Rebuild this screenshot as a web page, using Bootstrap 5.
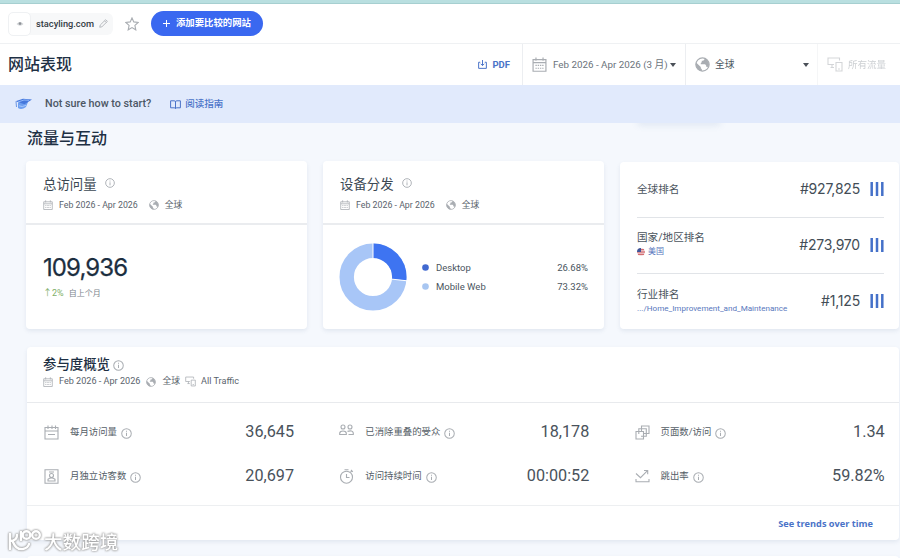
<!DOCTYPE html>
<html lang="zh-CN">
<head>
<meta charset="utf-8">
<meta name="viewport" content="width=device-width, initial-scale=1">
<title>网站表现</title>
<link href="https://cdn.jsdelivr.net/npm/bootstrap@5.3.0/dist/css/bootstrap.min.css" rel="stylesheet">
<style>
body{font-family:Roboto,"Noto Sans CJK SC",sans-serif;font-size:9.5px;line-height:1;color:#4a5560;background:#f5f8fd;height:558px;overflow:hidden;position:relative}
svg{display:block;flex:none}
.ico{fill:none;stroke:#a9adb2;stroke-width:1.1}
.strip{height:4px;background:#b9dfe0;border-bottom:1px solid #a6cfd0}
.topbar{height:40px;border-bottom:1px solid #eff1f3;padding-left:8px}
.site-chip{height:22px;width:105px;background:#f7f8f9;border-radius:6px;font-size:9.25px;font-weight:500;color:#333b44}
.favicon-box{width:23px;height:24px;background:#fff;border:1px solid #eff1f3;border-radius:5px}
.btn-compare{height:25px;width:112px;background:#3a68f0;color:#fff;font-size:9.4px;font-weight:700;border-radius:13px}
.titlebar{height:41px}
.page-title{font-size:16px;font-weight:500;color:#1e3044;padding-left:8px}
.filter{border-left:1px solid #eceef1;height:41px}
.blue{color:#4a73c8}
.caret{width:0;height:0;border:3.5px solid transparent;border-top:4px solid #4a5058;border-bottom:0}
.hint{height:38px;background:#e1eafc;padding-left:14px;position:relative;z-index:1}
.section-title{font-size:16px;font-weight:500;color:#1e3044;height:38px;padding:6px 0 0 27px}
.panel{background:#fff;border-radius:4px;box-shadow:0 2px 4px rgba(70,100,140,.11)}
.cards{padding-left:26px;gap:16px}
.cards .metric{width:281px;height:168px}
.metric-head{height:64px;padding:17px 17px 0;border-bottom:2px solid #eaecef}
.metric-title{font-size:13.4px;font-weight:400;color:#3c4853;height:14px}
.meta{font-size:8.8px;color:#5a636c}
.big-number{font-family:Inter,sans-serif;font-size:24px;font-weight:400;color:#1c2e40;letter-spacing:-.9px;-webkit-text-stroke:.25px #1c2e40}
.rank{width:279px;height:167px;padding:0 15px 0 17px;margin-top:1px}
.rank-row{height:56px;border-bottom:1px solid #e1e4e8;padding-bottom:2px}
.rank-row:last-child{border:0}
.rank-label{font-size:10.6px;color:#49535c}
.rank-link{font-size:8.1px;color:#5877bd}
.rank-value{font-family:Inter,sans-serif;font-size:14px;font-weight:400;color:#434d56;letter-spacing:-.2px}
.engage{margin:18px 0 0 27px;width:872px;height:193px}
.engage-head{height:56px;padding:11px 17px 0 16px;border-bottom:1px solid #e8eaed}
.engage-body{height:103px;padding:7px 0 0 17px;border-bottom:1px solid #edeff1}
.kpi{height:44px;width:250px}
.kpi-icon{width:26px}
.kpi-label{font-size:9.4px;color:#555e67}
.kpi-value{font-size:16.2px;color:#49525b;padding-top:1px}
.trend{height:36px;font-family:"Open Sans",sans-serif;font-weight:700;font-size:9.2px;padding-right:26px}
.next-panel{margin:16px 0 0 27px;width:872px;height:10px}
.tab-shadow{left:637px;top:115px;width:84px;height:8px;border-radius:6px;box-shadow:0 3px 6px rgba(100,130,180,.12)}
.stamp{left:8px;top:528px;z-index:3;filter:drop-shadow(0 0 1px #999) drop-shadow(0 0 .6px #aaa)}
.stamp-text{font-family:"Noto Sans CJK SC",sans-serif;font-size:18.6px;font-weight:500;color:#fff}
</style>
<script src="https://cdn.jsdelivr.net/npm/bootstrap@5.3.0/dist/js/bootstrap.bundle.min.js"></script>
</head>
<body>
<svg width="0" height="0" class="position-absolute">
  <symbol id="cal" viewBox="0 0 14 14"><path d="M1 2.500h12v10.800H1zM1 5.300h12M3.700.4v3M10.300.4v3"/><path d="M3.200 7.800h7.800M3.200 10.500h7.800" stroke-dasharray="1.300 .8"/></symbol>
  <symbol id="info" viewBox="0 0 12 12"><circle cx="6" cy="6" r="5.200"/><path d="M6 5.200v3.600M6 3.100v1.100"/></symbol>
  <symbol id="globe" viewBox="0 0 14 14"><circle cx="7" cy="7" r="6.200"/><path fill="#a9adb2" stroke="none" d="M1 5.200l4.400 4.100v1.200l1 1v1.800A6.500 6.500 0 0 1 1 5.200zM8.800 1.100v1.200L7.600 3.500H6.300v1.400l-.9.8v1h4l1 1.200v1.300h1.100l.8.9A6.400 6.400 0 0 0 8.800 1.100z"/></symbol>
  <symbol id="devices" viewBox="0 0 16 15"><path d="M12.500 3.500V1H1v6.500h6M3.500 10.500H7M5 7.500v3M9 5.500h6v8.500H9zM11 12h2"/></symbol>
  <symbol id="bars" viewBox="0 0 14 14"><path d="M1.700 0v14M7 0v14M12.300 0v14" stroke="#4571c9" stroke-width="2.500"/></symbol>
  <symbol id="bars-low" viewBox="0 0 14 14"><path d="M1.700 0v14M7 0v14M12.300 2v12" stroke="#4571c9" stroke-width="2.500"/></symbol>
</svg>

<div class="strip"></div>
<header class="topbar bg-white d-flex align-items-center">
  <div class="site-chip d-flex align-items-center">
    <div class="favicon-box d-flex align-items-center justify-content-center">
      <svg width="8" height="6" viewBox="0 0 8 6"><path d="M.5 3Q4-.8 7.500 3 4 6.500.500 3z" fill="#d3d5d8"/><circle cx="4" cy="2.600" r="1.300" fill="#8d9196"/></svg>
    </div>
    <span style="margin-left:5px">stacyling.com</span>
    <svg class="ico" style="margin-left:5px" width="9" height="9" viewBox="0 0 10 10"><path d="M.8 9.200l.6-2.500L7.400.8l1.900 1.900-6 5.900zM6.200 2l1.900 1.900" stroke-width=".9"/></svg>
  </div>
  <svg class="ico" style="margin-left:12px" width="14" height="14" viewBox="0 0 14 14"><path d="M7 .9l1.800 4 4.400.5-3.300 3 .9 4.400L7 10.600l-3.800 2.200.9-4.400-3.300-3 4.400-.5z" stroke-width="1.100"/></svg>
  <button class="btn btn-compare d-flex align-items-center justify-content-center p-0 border-0" style="margin-left:12px">
    <svg width="7" height="7" viewBox="0 0 7 7" stroke="#fff" stroke-width="1"><path d="M3.500 0v7M0 3.500h7"/></svg><span style="margin-left:6px">添加要比较的网站</span>
  </button>
</header>

<div class="titlebar bg-white d-flex align-items-center">
  <h1 class="page-title m-0 flex-grow-1">网站表现</h1>
  <a class="blue text-decoration-none d-flex align-items-center fw-bold" style="padding-right:12px;gap:5px">
    <svg width="9" height="9" viewBox="0 0 10 10" fill="none" stroke="#4a73c8" stroke-width="1.100"><path d="M2.500 2.500H.7v6.800h8.600V2.500H7.500M5 0v6M3 4.200l2 2 2-2"/></svg>PDF</a>
  <div class="filter d-flex align-items-center" style="width:163px;padding-left:9px">
    <svg class="ico" width="15" height="15"><use href="#cal"/></svg>
    <span class="text-nowrap" style="margin-left:6px;font-size:9.800px;color:#6b737b">Feb 2026 - Apr 2026 (3 月)</span><span class="caret" style="margin-left:2px"></span>
  </div>
  <div class="filter d-flex align-items-center" style="width:132px;padding-left:9px">
    <svg class="ico" width="15" height="15"><use href="#globe"/></svg>
    <span style="margin-left:5px;font-size:9.700px">全球</span><span class="caret ms-auto" style="margin-right:8px"></span>
  </div>
  <div class="filter d-flex align-items-center opacity-50" style="width:83px;padding-left:9px">
    <svg class="ico" width="16" height="15"><use href="#devices"/></svg>
    <span class="text-nowrap" style="margin-left:5px;color:#9ba1a8">所有流量</span>
  </div>
</div>

<div class="hint d-flex align-items-center">
  <svg width="19" height="14" viewBox="0 0 19 14"><path d="M4 5.500l10-.5-2 5q-4.500 3.500-8 1z" fill="#6d9ff0"/><path d="M1.500 4.200L9 1.800l9 .7-7.500 4.800z" fill="#4577dc"/><path d="M4 5l6-2 5 .3" fill="none" stroke="#8fb7fa"/><path d="M2 4.500l.500 5.500" stroke="#6b96e4"/><path d="M5 8.800q3 1.800 7-.5" stroke="#a7c7fc" fill="none"/></svg>
  <span style="margin-left:12px;font-size:10.750px;font-weight:500;color:#4c5764">Not sure how to start?</span>
  <svg style="margin-left:19px" width="11" height="9" viewBox="0 0 11 9" fill="none" stroke="#4a73c8"><path d="M.6.8h3.600q1.300 0 1.300 1 0-1 1.300-1h3.600v7H6.800q-1.300 0-1.300.8 0-.8-1.300-.8H.6zM5.500 1.800v6.500"/></svg>
  <span class="blue" style="margin-left:4px;font-size:9.500px;font-weight:500">阅读指南</span>
</div>
<div class="tab-shadow position-absolute"></div>

<h2 class="section-title m-0">流量与互动</h2>

<main>
  <div class="cards d-flex">
    <section class="panel metric">
      <div class="metric-head">
        <div class="metric-title d-flex align-items-center">总访问量<svg class="ico" style="margin-left:8px;margin-top:-4px" width="10" height="10"><use href="#info"/></svg></div>
        <div class="meta d-flex align-items-center" style="margin-top:8px">
          <svg class="ico" width="10" height="10"><use href="#cal"/></svg><span style="margin-left:6px">Feb 2026 - Apr 2026</span>
          <svg class="ico" style="margin-left:11px" width="10" height="10"><use href="#globe"/></svg><span style="margin-left:6px">全球</span>
        </div>
      </div>
      <div style="padding:31px 0 0 17px">
        <div class="big-number">109,936</div>
        <div class="d-flex align-items-center" style="margin-top:9px;color:#7d858d"><span style="color:#7fb069;font-size:9px">↑2%</span><span style="margin-left:5px;font-size:8px">自上个月</span></div>
      </div>
    </section>

    <section class="panel metric">
      <div class="metric-head">
        <div class="metric-title d-flex align-items-center">设备分发<svg class="ico" style="margin-left:8px;margin-top:-4px" width="10" height="10"><use href="#info"/></svg></div>
        <div class="meta d-flex align-items-center" style="margin-top:8px">
          <svg class="ico" width="10" height="10"><use href="#cal"/></svg><span style="margin-left:6px">Feb 2026 - Apr 2026</span>
          <svg class="ico" style="margin-left:11px" width="10" height="10"><use href="#globe"/></svg><span style="margin-left:6px">全球</span>
        </div>
      </div>
      <div class="d-flex align-items-center" style="height:104px;padding:0 16px">
        <svg width="68" height="68" viewBox="-34 -34 68 68">
          <circle r="26.300" fill="none" stroke="#a8c6f7" stroke-width="14.400"/>
          <circle r="26.300" fill="none" stroke="#3e74f1" stroke-width="14.400" pathLength="100" stroke-dasharray="26.680 73.320" transform="rotate(-90)"/>
          <path d="M0-34v15M18.500 2.100l15.500 1.700" stroke="#fff"/>
        </svg>
        <div class="flex-grow-1" style="margin-left:15px">
          <div class="d-flex align-items-center" style="height:19px"><svg width="7" height="7"><circle cx="3.500" cy="3.500" r="3.300" fill="#4169d0"/></svg><span style="margin-left:7px">Desktop</span><span class="ms-auto">26.68%</span></div>
          <div class="d-flex align-items-center" style="height:19px"><svg width="7" height="7"><circle cx="3.500" cy="3.500" r="3.300" fill="#a8c6f1"/></svg><span style="margin-left:7px">Mobile Web</span><span class="ms-auto">73.32%</span></div>
        </div>
      </div>
    </section>

    <section class="panel rank">
      <div class="rank-row d-flex align-items-center">
        <span class="rank-label pt-1">全球排名</span><span class="rank-value ms-auto">#927,825</span>
        <svg style="margin-left:10px" width="14" height="14"><use href="#bars"/></svg>
      </div>
      <div class="rank-row d-flex align-items-center">
        <div><div class="rank-label">国家/地区排名</div>
          <div class="rank-link d-flex align-items-center" style="margin-top:5px"><svg width="8" height="8" viewBox="0 0 8 8"><circle cx="4" cy="4" r="4" fill="#f3dfe2"/><path d="M1 1.800h6M0 4h8M1 6.200h6" stroke="#c9494f" stroke-width="1.100"/><path d="M4 0v4H0a4 4 0 0 1 4-4z" fill="#3e5598"/></svg><span style="margin-left:3px;font-size:8px">美国</span></div></div>
        <span class="rank-value ms-auto">#273,970</span>
        <svg style="margin-left:10px" width="14" height="14"><use href="#bars-low"/></svg>
      </div>
      <div class="rank-row d-flex align-items-center">
        <div><div class="rank-label">行业排名</div><div class="rank-link" style="margin-top:4px">.../Home_Improvement_and_Maintenance</div></div>
        <span class="rank-value ms-auto">#1,125</span>
        <svg style="margin-left:10px" width="14" height="14"><use href="#bars"/></svg>
      </div>
    </section>
  </div>

  <section class="panel engage">
    <div class="engage-head">
      <div class="metric-title d-flex align-items-center" style="color:#1e3044;font-weight:500">参与度概览<svg class="ico" style="margin-left:3px" width="11" height="11"><use href="#info"/></svg></div>
      <div class="meta d-flex align-items-center" style="margin-top:4px">
        <svg class="ico" width="10" height="10"><use href="#cal"/></svg><span style="margin-left:6px;font-size:9.100px">Feb 2026 - Apr 2026</span>
        <svg class="ico" style="margin-left:6px" width="10" height="10"><use href="#globe"/></svg><span style="margin-left:6px">全球</span>
        <svg class="ico" style="margin-left:5px" width="11" height="11"><use href="#devices"/></svg><span style="margin-left:5px;font-size:9.100px">All Traffic</span>
      </div>
    </div>
    <div class="engage-body d-flex" style="gap:45.300px">
      <div>
        <div class="kpi d-flex align-items-center"><div class="kpi-icon"><svg class="ico" width="15" height="15" viewBox="0 0 15 15"><path d="M1 2.500h13v11.500H1zM1 6h13M4 .5v3.500M8 .5v3.500M11.500.5v3.500M4 9.500h7"/></svg></div><span class="kpi-label">每月访问量</span><svg class="ico" style="margin:2px 0 0 4px" width="11" height="11"><use href="#info"/></svg><span class="kpi-value ms-auto">36,645</span></div>
        <div class="kpi d-flex align-items-center"><div class="kpi-icon"><svg class="ico" width="15" height="15" viewBox="0 0 15 15"><path d="M1 .8h13v13.400H1zM5 3h5M4 12v-1.700q3.500-2.500 7 0V12z"/><circle cx="7.500" cy="6.500" r="2"/></svg></div><span class="kpi-label">月独立访客数</span><svg class="ico" style="margin:2px 0 0 4px" width="11" height="11"><use href="#info"/></svg><span class="kpi-value ms-auto">20,697</span></div>
      </div>
      <div>
        <div class="kpi d-flex align-items-center"><div class="kpi-icon"><svg class="ico" style="margin-top:-4px" width="15" height="12" viewBox="0 0 15 12"><circle cx="4" cy="3" r="2"/><circle cx="11" cy="3" r="2"/><path d="M.7 10.500V9q.5-2 3.300-2t3.300 2v1.500zM8.500 7.400q5-1.500 5.800 1.600v1.500H9.500"/></svg></div><span class="kpi-label">已消除重叠的受众</span><svg class="ico" style="margin:2px 0 0 4px" width="11" height="11"><use href="#info"/></svg><span class="kpi-value ms-auto">18,178</span></div>
        <div class="kpi d-flex align-items-center"><div class="kpi-icon"><svg class="ico" width="15" height="15" viewBox="0 0 15 15"><circle cx="7.500" cy="8.200" r="6"/><path d="M7.500 5v3.500h3M5.500.7h4M11.500 3.200l1.500-1.500M12 1l1.800 1.800"/></svg></div><span class="kpi-label">访问持续时间</span><svg class="ico" style="margin:2px 0 0 4px" width="11" height="11"><use href="#info"/></svg><span class="kpi-value ms-auto">00:00:52</span></div>
      </div>
      <div>
        <div class="kpi d-flex align-items-center"><div class="kpi-icon"><svg class="ico" width="15" height="15" viewBox="0 0 15 15"><path d="M1 6.500h7.500V14H1zM3.800 9V3.700h7.500v7.500H6M6.500 6V1H14v7.500H9"/></svg></div><span class="kpi-label">页面数/访问</span><svg class="ico" style="margin:2px 0 0 4px" width="11" height="11"><use href="#info"/></svg><span class="kpi-value ms-auto">1.34</span></div>
        <div class="kpi d-flex align-items-center"><div class="kpi-icon"><svg class="ico" width="15" height="14" viewBox="0 0 15 14"><path d="M1 10v2.800h13V10M1 4.500l4.500 4.200 7-7M9 1.500h3.700v3.700"/></svg></div><span class="kpi-label">跳出率</span><svg class="ico" style="margin:2px 0 0 4px" width="11" height="11"><use href="#info"/></svg><span class="kpi-value ms-auto">59.82%</span></div>
      </div>
    </div>
    <div class="trend d-flex align-items-center justify-content-end blue">See trends over time</div>
  </section>
  <section class="panel next-panel"></section>
</main>

<div class="stamp position-absolute d-flex align-items-center">
  <svg width="34" height="24" viewBox="0 0 34 24" fill="none" stroke="#fff" stroke-width="2.400" stroke-linecap="round"><path d="M2 6v15M2 13q7 0 7-6M5 14q3 8 10 7 5-1 6-5M13 4v8"/><circle cx="18.500" cy="7" r="3.800"/><circle cx="28" cy="7" r="3.800"/></svg>
  <span class="stamp-text text-nowrap" style="margin:3px 0 0 2px">大数跨境</span>
</div>
</body>
</html>
